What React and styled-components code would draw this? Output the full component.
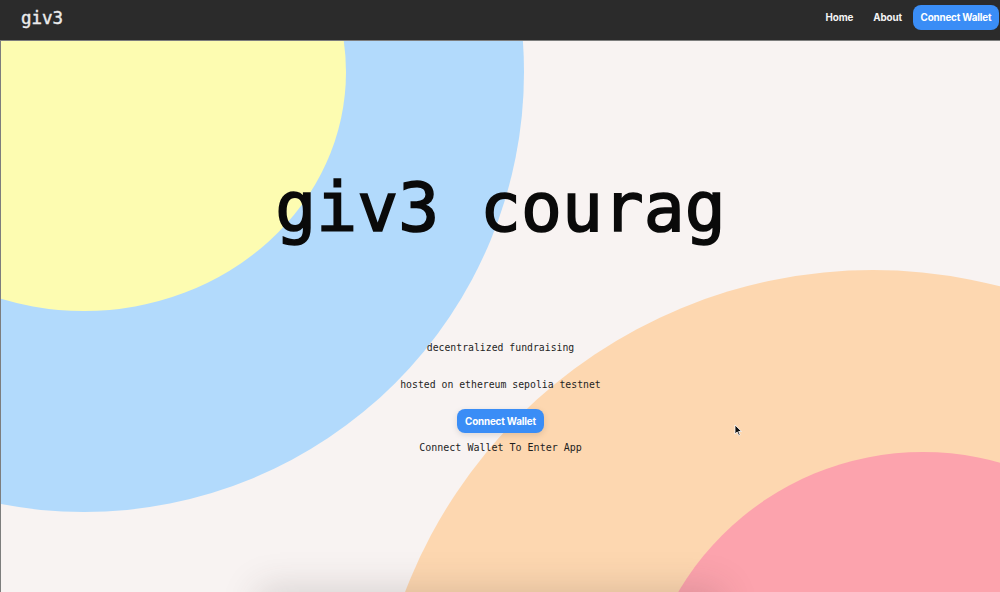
import React from "react";
import styled, { createGlobalStyle } from "styled-components";

const GlobalStyle = createGlobalStyle`
  html, body {
    margin: 0;
    padding: 0;
    background: #f8f3f2;
    overflow: hidden;
  }
  * {
    box-sizing: border-box;
  }
`;

const Page = styled.div`
  width: 1000px;
  min-height: 592px;
  font-family: "DejaVu Sans Mono", "Liberation Mono", monospace;
`;

const NavBar = styled.nav`
  height: 40px;
  background: #2b2b2b;
  display: flex;
  align-items: center;
  justify-content: space-between;
  padding: 0 1px 0 21px;
`;

const Logo = styled.div`
  font-family: "DejaVu Sans Mono", monospace;
  font-size: 17.5px;
  color: #ececec;
  -webkit-text-stroke: 0.4px #ececec;
  margin-top: -5px;
`;

const NavLinks = styled.div`
  display: flex;
  align-items: center;
  margin-top: -6px;
`;

const NavLink = styled.a`
  font-family: Inter, "Liberation Sans", sans-serif;
  font-weight: 700;
  font-size: 9.8px;
  letter-spacing: -0.1px;
  color: #f4f4f4;
  padding: 0 10px;
  text-decoration: none;
  cursor: pointer;
`;

const WalletButton = styled.button`
  font-family: Inter, "Liberation Sans", sans-serif;
  font-weight: 700;
  font-size: 9.8px;
  letter-spacing: -0.15px;
  color: #ffffff;
  background: #3a8df6;
  border: none;
  border-radius: 8px;
  height: ${(p) => p.$h}px;
  width: ${(p) => p.$w}px;
  padding: 0;
  margin: ${(p) => p.$margin};
  box-shadow: ${(p) => (p.$raised ? "0 2px 6px rgba(0,0,0,0.12)" : "none")};
  cursor: pointer;
  white-space: nowrap;
`;

const Hero = styled.section`
  position: relative;
  height: 560px;
  overflow: hidden;
  border-top: 1px solid #7d7d7d;
  border-left: 1px solid #7d7d7d;
  display: flex;
  flex-direction: column;
  align-items: center;
`;

const Blob = styled.div`
  position: absolute;
  left: ${(p) => p.$x}px;
  top: ${(p) => p.$y}px;
  width: ${(p) => p.$w}px;
  height: ${(p) => p.$h}px;
  border-radius: 50%;
  background: ${(p) => p.$color};
  z-index: 0;
`;

const Content = styled.div`
  position: relative;
  z-index: 1;
  display: flex;
  flex-direction: column;
  align-items: center;
`;

const Title = styled.h1`
  margin: 133px 0 0;
  font-family: "DejaVu Sans Mono", monospace;
  font-weight: 400;
  font-size: 68px;
  line-height: 68px;
  color: #0a0a0a;
  white-space: pre;
  -webkit-text-stroke: 1.7px #0a0a0a;
`;

const Line = styled.p`
  margin: ${(p) => p.$top}px 0 0;
  font-family: "DejaVu Sans Mono", monospace;
  font-size: ${(p) => p.$size || 9.8}px;
  line-height: 14px;
  color: #1e1e1e;
  white-space: pre;
`;

const Cursor = styled.svg`
  position: absolute;
  left: 733px;
  top: 383px;
  z-index: 2;
`;

const Card = styled.div`
  position: relative;
  z-index: 3;
  width: 440px;
  height: 200px;
  margin: 0 auto;
  left: -10px;
  background: #f1eded;
  box-shadow: 0 0 34px 12px rgba(60, 50, 50, 0.17);
`;

const blobs = [
  { x: -357, y: -409, w: 880, h: 880, color: "#b2dafc" },
  { x: -179, y: -208, w: 524, h: 478, color: "#fdfcb1" },
  { x: 371, y: 229, w: 1002, h: 1002, color: "#fdd7b0" },
  { x: 638, y: 411, w: 568, h: 568, color: "#fca3ad" },
];

export default function App() {
  return (
    <Page>
      <GlobalStyle />
      <NavBar>
        <Logo>giv3</Logo>
        <NavLinks>
          <NavLink>Home</NavLink>
          <NavLink>About</NavLink>
          <WalletButton $h={25} $w={86} $margin="0 0 0 1px">
            Connect Wallet
          </WalletButton>
        </NavLinks>
      </NavBar>
      <Hero>
        {blobs.map((b, i) => (
          <Blob key={i} $x={b.x} $y={b.y} $w={b.w} $h={b.h} $color={b.color} />
        ))}
        <Content>
          <Title>giv3 courag</Title>
          <Line $top={99}>decentralized fundraising</Line>
          <Line $top={23}>hosted on ethereum sepolia testnet</Line>
          <WalletButton $h={24} $w={87} $margin="17px 0 0" $raised>
            Connect Wallet
          </WalletButton>
          <Line $top={8} $size={10}>
            Connect Wallet To Enter App
          </Line>
        </Content>
        <Cursor width="9" height="13" viewBox="0 0 9 13">
          <path
            d="M1 1 L1 10 L3.2 8 L4.8 11.6 L6.2 11 L4.7 7.5 L7.6 7.5 Z"
            fill="#111"
            stroke="#fff"
            strokeWidth="0.8"
          />
        </Cursor>
      </Hero>
      <Card />
    </Page>
  );
}
